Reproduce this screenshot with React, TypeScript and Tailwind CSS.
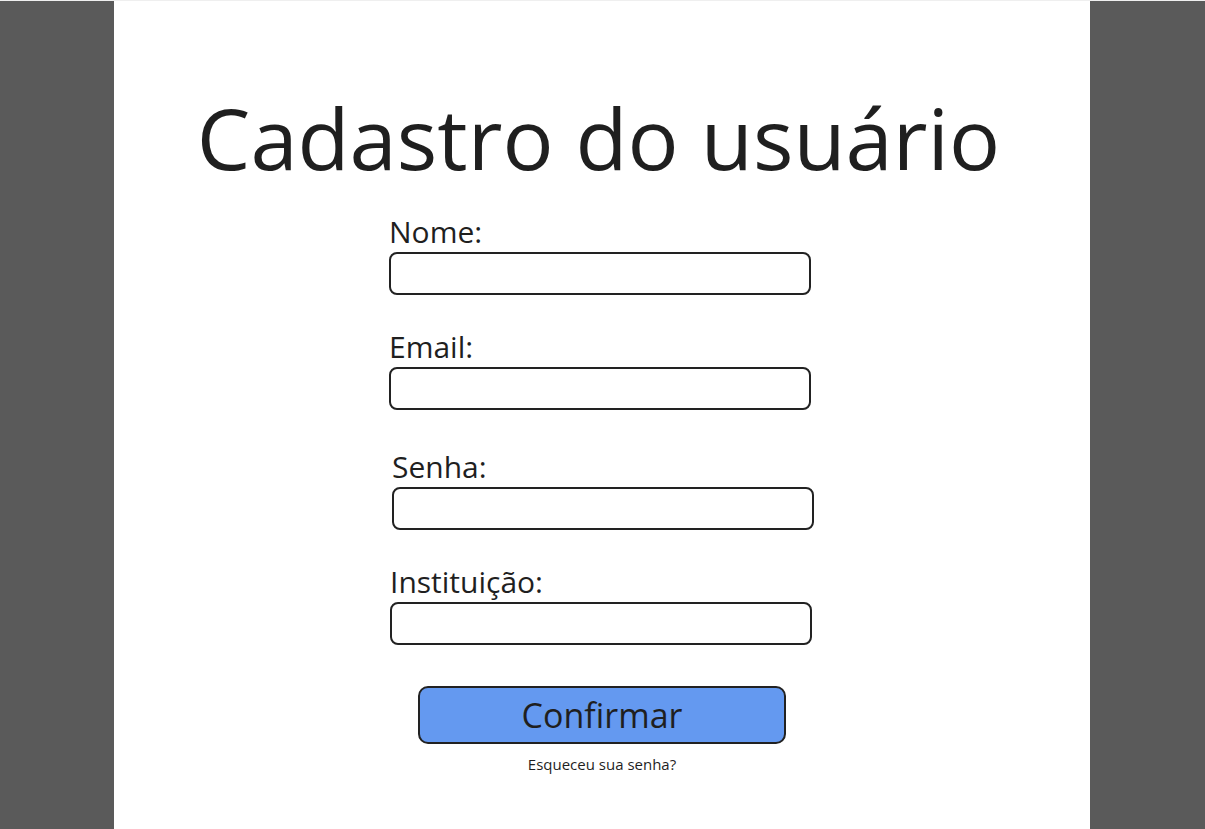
import React from "react";

const font = { fontFamily: '"Open Sans", "Noto Sans", sans-serif' };

function Field({ label, ml, mt }: { label: string; ml: string; mt: string }) {
  return (
    <div className={`flex flex-col ${ml} ${mt}`}>
      <label className="text-[30px] leading-[36px] text-[#1f1f1f]">{label}</label>
      <input className="mt-[2px] h-[43px] w-[422px] rounded-[8px] border-2 border-[#222222] bg-white" />
    </div>
  );
}

export default function App() {
  return (
    <div className="flex h-[829px] w-[1205px] flex-col bg-[#efefef]" style={font}>
      <div className="mt-[1px] flex flex-1">
        <div className="w-[114px] bg-[#5a5a5a]" />
        <div className="flex w-[976px] flex-col items-center bg-white">
          <h1 className="mt-[86px] mr-[7px] text-[85px] leading-[100px] text-[#1f1f1f]">Cadastro do usuário</h1>
          <div className="flex w-[422px] flex-col self-start ml-[275px]">
            <Field label="Nome:" ml="ml-0" mt="mt-[27px]" />
            <Field label="Email:" ml="ml-0" mt="mt-[34px]" />
            <Field label="Senha:" ml="ml-[3px]" mt="mt-[39px]" />
            <Field label="Instituição:" ml="ml-[1px]" mt="mt-[34px]" />
          </div>
          <button className="mt-[41px] h-[58px] w-[368px] rounded-[10px] border-2 border-[#222222] bg-[#6499f0] text-[34px] text-[#1f1f1f]">
            Confirmar
          </button>
          <div className="mt-[9px] text-[15px] text-[#1f1f1f]">Esqueceu sua senha?</div>
        </div>
        <div className="flex-1 bg-[#5a5a5a]" />
      </div>
    </div>
  );
}
